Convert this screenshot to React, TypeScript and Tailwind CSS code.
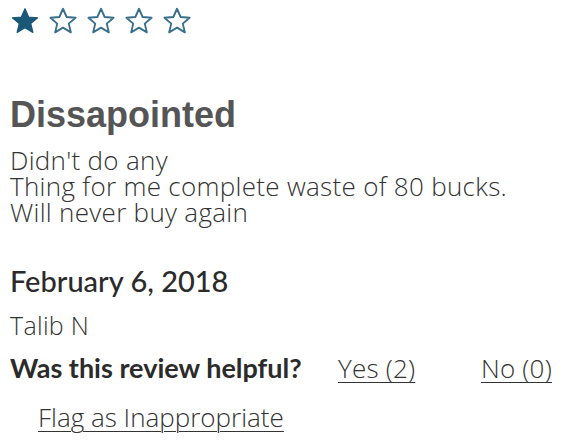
import React from 'react';

function Star({ filled }: { filled: boolean }) {
  return (
    <svg viewBox="0 0 24 24" className="h-[30px] w-[30px]">
      <path
        d="M12 2.2l2.9 6.6 7.2.6-5.5 4.7 1.7 7-6.3-3.8-6.3 3.8 1.7-7L1.9 9.4l7.2-.6z"
        fill={filled ? '#1b5777' : 'none'}
        stroke={filled ? '#1b5777' : '#3a6f8c'}
        strokeWidth={filled ? 1 : 1.5}
        strokeLinejoin="round"
      />
    </svg>
  );
}

export default function App() {
  const stars = [true, false, false, false, false];

  return (
    <div className="min-h-screen bg-white px-[10px] pt-[6px] text-[#333] font-['Open_Sans',sans-serif]">
      <div className="flex gap-[8px]">
        {stars.map((f, i) => (
          <Star key={i} filled={f} />
        ))}
      </div>

      <h2 className="mt-[59px] text-[36px] font-bold leading-[40px] text-[#555] font-['Liberation_Sans',Arial,sans-serif]">
        Dissapointed
      </h2>

      <p className="mt-[12px] text-[26px] font-light leading-[26px] tracking-[0.3px] text-[#333]">
        Didn't do any
        <br />
        Thing for me complete waste of 80 bucks.
        <br />
        Will never buy again
      </p>

      <div className="mt-[40px] text-[29px] font-medium leading-[32px] text-[#2b2b2b] font-['Lato',sans-serif]">
        February 6, 2018
      </div>
      <div className="mt-[15px] text-[25px] font-light leading-[26px] tracking-[0.3px]">Talib N</div>

      <div className="mt-[15px] flex items-baseline whitespace-nowrap leading-[30px]">
        <span className="w-[328px] shrink-0 text-[27px] font-bold text-[#2b2b2b] font-['Lato',sans-serif]">
          Was this review helpful?
        </span>
        <span className="w-[143px] shrink-0 text-[26px] font-light tracking-[0.2px]">
          <a className="underline underline-offset-[4px] decoration-1">Yes (2)</a>
        </span>
        <a className="text-[26px] font-light tracking-[0.2px] underline underline-offset-[4px] decoration-1">No (0)</a>
      </div>

      <div className="mt-[19px] pl-[28px] text-[26px] font-light leading-[30px]">
        <a className="underline underline-offset-[4px] decoration-1">Flag as Inappropriate</a>
      </div>
    </div>
  );
}
